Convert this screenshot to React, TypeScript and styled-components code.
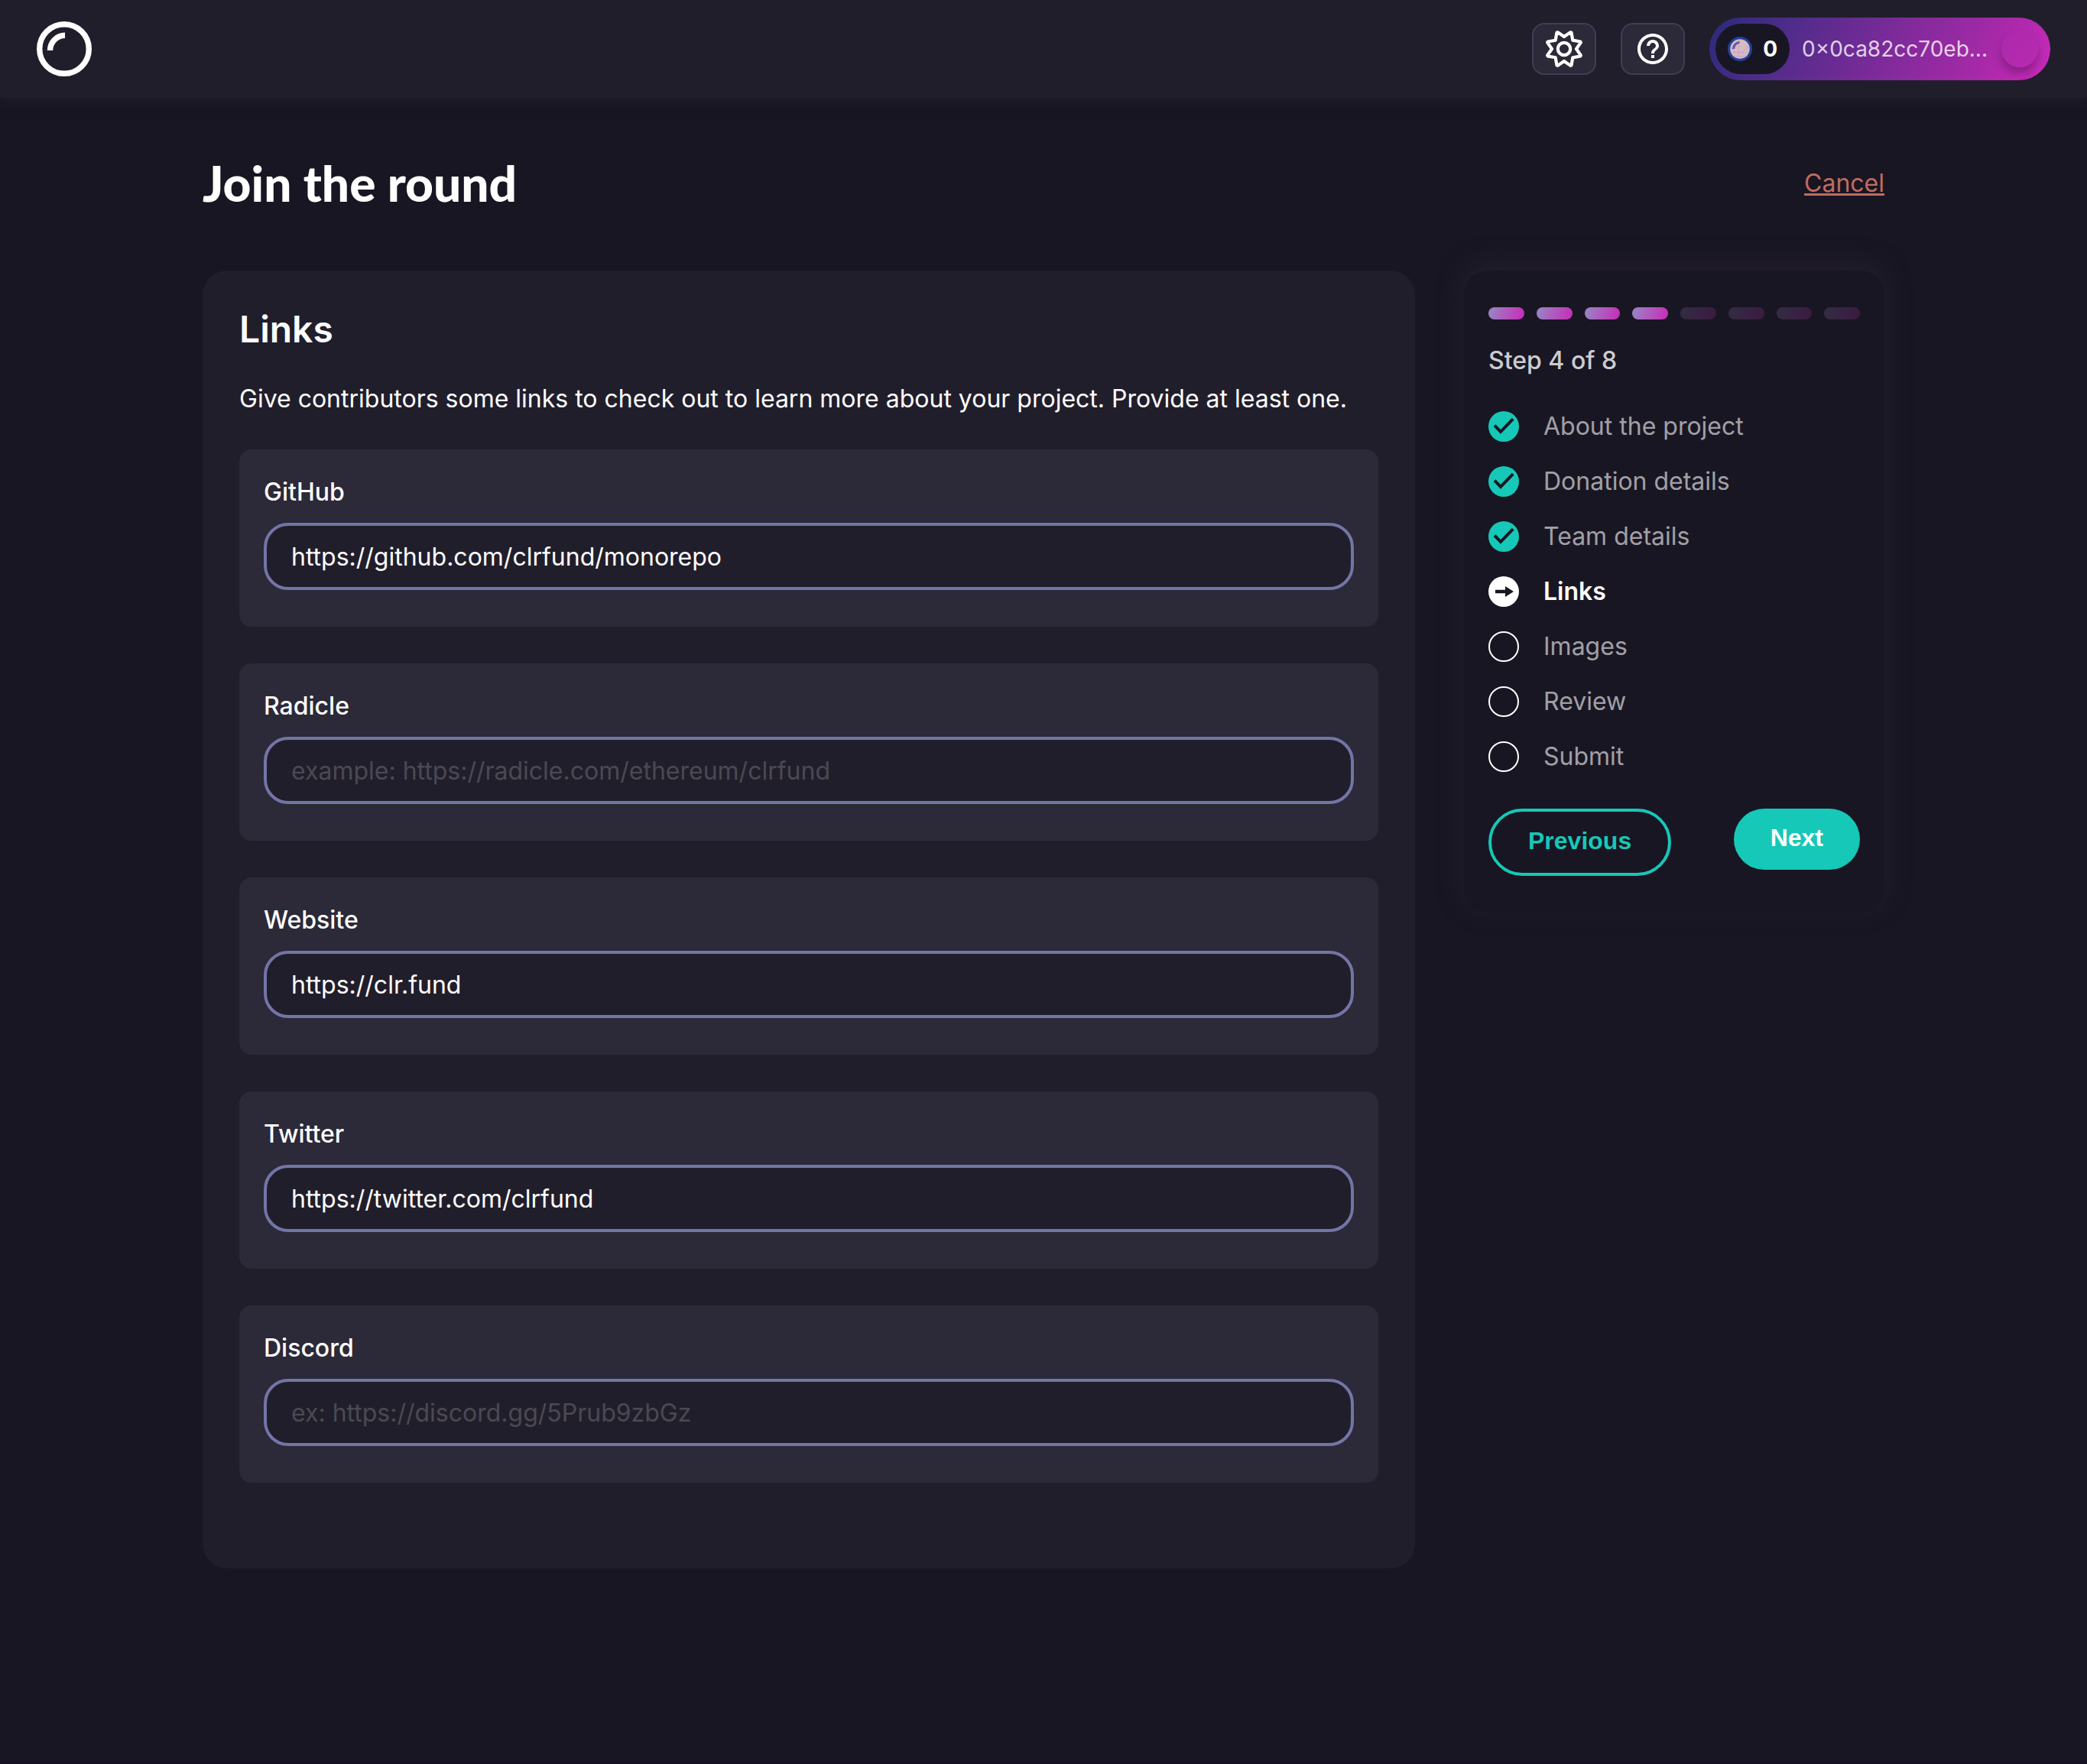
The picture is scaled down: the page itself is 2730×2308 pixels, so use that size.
import React, { useState } from "react";
import styled, { createGlobalStyle } from "styled-components";
import { MdHelpOutline } from "react-icons/md";

const color = {
  bg: "#191623",
  panel: "#211e2b",
  glow: "#23202d",
  raised: "#2c2938",
  outline: "#3f3d57",
  field: "#7375a6",
  green: "#16c8b7",
  error: "#c26b5f",
};

const GlobalStyle = createGlobalStyle`
  *, *::before, *::after { box-sizing: border-box; }
  body {
    margin: 0;
    background: ${color.bg};
    color: #fff;
    font-family: Inter, "Liberation Sans", sans-serif;
    font-size: 32px;
    line-height: 40px;
  }
`;

const Page = styled.div`
  min-height: 100vh;
  border-bottom: 2px solid #150f22;
`;

const Header = styled.header`
  display: flex;
  align-items: center;
  justify-content: space-between;
  height: 128px;
  padding: 0 48px;
  background: ${color.panel};
  box-shadow: 0 4px 16px ${color.panel};
`;

const HomeLink = styled.a`
  display: flex;
`;

const HeaderActions = styled.div`
  display: flex;
  align-items: center;
  gap: 32px;
`;

const IconButton = styled.button`
  display: flex;
  align-items: center;
  justify-content: center;
  width: 84px;
  height: 68px;
  padding: 0;
  border: 2px solid ${color.outline};
  border-radius: 16px;
  background: ${color.raised};
  color: #fff;
  cursor: pointer;
`;

const WalletButton = styled.button`
  display: flex;
  align-items: center;
  height: 82px;
  padding: 8px 16px 8px 8px;
  border: 0;
  border-radius: 41px;
  background: linear-gradient(120deg, #292b7a 0%, #512c8a 24%, #a829a9 80%, #cb2abb 100%);
  color: #fff;
  font: 400 28px/36px Inter, "Liberation Sans", sans-serif;
  cursor: pointer;
`;

const Balance = styled.span`
  display: flex;
  align-items: center;
  gap: 14px;
  height: 66px;
  padding: 0 16px;
  border-radius: 33px;
  background: ${color.bg};
  font-weight: 700;
`;

const Address = styled.span`
  margin: 0 18px 0 16px;
  color: rgba(255, 255, 255, 0.8);
`;

const Avatar = styled.span`
  width: 48px;
  height: 48px;
  border-radius: 50%;
  background: linear-gradient(120deg, #ab2aab, #b72ab1);
  box-shadow: 0 8px 12px rgba(0, 0, 0, 0.25);
`;

const Main = styled.main`
  max-width: 2200px;
  margin: 0 auto;
  padding: 64px 0;
`;

const TitleRow = styled.div`
  display: flex;
  align-items: center;
  justify-content: space-between;
  height: 96px;
  margin-bottom: 66px;
`;

const Title = styled.h1`
  margin: 0;
  font: 900 64px/80px "Lato Black", Lato, "Liberation Sans", sans-serif;
`;

const CancelLink = styled.a`
  color: ${color.error};
  text-decoration: underline;
`;

const Columns = styled.div`
  display: grid;
  grid-template-columns: minmax(0, 1fr) 25%;
  align-items: start;
  gap: 64px;
`;

const FormCard = styled.form`
  padding: 48px 48px 112px;
  border-radius: 32px;
  background: ${color.panel};
`;

const FormTitle = styled.h2`
  margin: 0;
  font-size: 48px;
  font-weight: 600;
  line-height: 58px;
`;

const Intro = styled.p`
  margin: 34px 0 38px;
  line-height: 56px;
`;

const Fields = styled.div`
  display: flex;
  flex-direction: column;
  gap: 48px;
`;

const Field = styled.div`
  display: flex;
  flex-direction: column;
  gap: 16px;
  padding: 32px 32px 48px;
  border-radius: 16px;
  background: ${color.raised};
`;

const Label = styled.label`
  font-weight: 500;
  line-height: 48px;
`;

const TextInput = styled.input`
  width: 100%;
  height: 88px;
  padding: 0 32px;
  border: 4px solid ${color.field};
  border-radius: 32px;
  outline: none;
  background: ${color.panel};
  color: #fff;
  font: inherit;

  &::placeholder {
    color: #4b4952;
    opacity: 1;
  }
`;

const Sidebar = styled.aside`
  padding: 48px 32px;
  border-radius: 32px;
  background: ${color.bg};
  box-shadow: 0 -8px 32px ${color.glow};
`;

const Progress = styled.div`
  display: flex;
  gap: 16px;
`;

const Segment = styled.span<{ $done: boolean }>`
  flex: 1;
  height: 16px;
  border-radius: 8px;
  background: linear-gradient(109deg, #9789c4 0%, #c72ab7 100%);
  opacity: ${(p) => (p.$done ? 1 : 0.2)};
`;

const StepCount = styled.p`
  margin: 34px 0 46px;
  color: rgba(255, 255, 255, 0.8);
  font-weight: 500;
`;

const Steps = styled.ol`
  display: flex;
  flex-direction: column;
  gap: 32px;
  margin: 0 0 48px;
  padding: 0;
  list-style: none;
`;

const Step = styled.li<{ $current: boolean }>`
  display: flex;
  align-items: center;
  gap: 32px;
  color: ${(p) => (p.$current ? "#fff" : "rgba(255, 255, 255, 0.6)")};
  font-weight: ${(p) => (p.$current ? 600 : 400)};
`;

const Actions = styled.div`
  display: flex;
  align-items: flex-start;
  justify-content: space-between;
`;

const PillButton = styled.button<{ $outlined?: boolean }>`
  padding: 18px 48px 22px;
  border: ${(p) => (p.$outlined ? `4px solid ${color.green}` : "0")};
  border-radius: 44px;
  background: ${(p) => (p.$outlined ? "transparent" : color.green)};
  color: ${(p) => (p.$outlined ? color.green : "#fff")};
  font: 700 32px/40px "Liberation Sans", Arial, sans-serif;
  cursor: pointer;
`;

const Logo = () => (
  <svg width="72" height="72" viewBox="0 0 72 72" fill="none" stroke="#fff" strokeWidth="7.4" aria-hidden="true">
    <circle cx="36" cy="36" r="32.3" />
    <path d="M17.5 38A19.5 19.7 0 0 1 37 18.3" />
  </svg>
);

// Eight teeth, with a valley on each axis and diagonal.
const gearPath = Array.from({ length: 8 }, (_, i) => {
  const at = (deg: number, r: number) => {
    const a = ((deg + i * 45) * Math.PI) / 180;
    return `${(24 + r * Math.sin(a)).toFixed(2)} ${(24 - r * Math.cos(a)).toFixed(2)}`;
  };
  return `${i ? "L" : "M"}${at(0, 16)}L${at(21, 23.4)}L${at(24, 23.4)}`;
}).join("");

const GearIcon = () => (
  <svg width="48" height="48" viewBox="0 0 48 48" fill="none" stroke="currentColor" strokeWidth="4.2" strokeLinejoin="round" aria-hidden="true">
    <path d={`${gearPath}Z`} />
    <circle cx="24" cy="24" r="8.2" />
  </svg>
);

const TokenIcon = () => (
  <svg width="32" height="32" viewBox="0 0 32 32" fill="none" aria-hidden="true">
    <circle cx="16" cy="16" r="14.4" fill="#d5bbc2" stroke="#1f429b" strokeWidth="3.2" />
    <path d="M14 3.5V28.5M4 13C8 24 22 24 27 10M5 21H27M7 25.5H25" stroke="#cfa3c6" strokeWidth="1" />
    <path d="M7.5 16A8.5 8.5 0 0 1 15.5 7.5" stroke="#6b56a3" strokeWidth="3.2" />
  </svg>
);

type StepState = "done" | "current" | "todo";

const StepIcon = ({ state }: { state: StepState }) => (
  <svg width="40" height="40" viewBox="0 0 40 40" fill="none" aria-hidden="true">
    {state === "done" && (
      <>
        <circle cx="20" cy="20" r="20" fill={color.green} />
        <path d="M8 18.6L16 26.8L32.2 10.2" stroke={color.bg} strokeWidth="4" />
      </>
    )}
    {state === "current" && (
      <>
        <circle cx="20" cy="20" r="20" fill="#fff" />
        <path d="M9 17.8H22V13L33 20L22 27V22.2H9Z" fill={color.bg} />
      </>
    )}
    {state === "todo" && <circle cx="20" cy="20" r="19" stroke="#fff" strokeWidth="2" />}
  </svg>
);

const fields = [
  { id: "github", label: "GitHub", value: "https://github.com/clrfund/monorepo", placeholder: "" },
  { id: "radicle", label: "Radicle", value: "", placeholder: "example: https://radicle.com/ethereum/clrfund" },
  { id: "website", label: "Website", value: "https://clr.fund", placeholder: "" },
  { id: "twitter", label: "Twitter", value: "https://twitter.com/clrfund", placeholder: "" },
  { id: "discord", label: "Discord", value: "", placeholder: "ex: https://discord.gg/5Prub9zbGz" },
];

const steps = ["About the project", "Donation details", "Team details", "Links", "Images", "Review", "Submit"];
const currentStep = 3;
const totalSteps = 8;

export default function App() {
  const [values, setValues] = useState<Record<string, string>>(
    Object.fromEntries(fields.map((f) => [f.id, f.value]))
  );

  return (
    <Page>
      <GlobalStyle />
      <Header>
        <HomeLink href="#" aria-label="Home">
          <Logo />
        </HomeLink>
        <HeaderActions>
          <IconButton type="button" aria-label="Settings">
            <GearIcon />
          </IconButton>
          <IconButton type="button" aria-label="Help">
            <MdHelpOutline size={48} />
          </IconButton>
          <WalletButton type="button">
            <Balance>
              <TokenIcon />0
            </Balance>
            <Address>0×0ca82cc70eb...</Address>
            <Avatar />
          </WalletButton>
        </HeaderActions>
      </Header>

      <Main>
        <TitleRow>
          <Title>Join the round</Title>
          <CancelLink href="#">Cancel</CancelLink>
        </TitleRow>
        <Columns>
          <FormCard id="links-form" onSubmit={(e) => e.preventDefault()}>
            <FormTitle>Links</FormTitle>
            <Intro>
              Give contributors some links to check out to learn more about your project. Provide at least one.
            </Intro>
            <Fields>
              {fields.map((f) => (
                <Field key={f.id}>
                  <Label htmlFor={f.id}>{f.label}</Label>
                  <TextInput
                    id={f.id}
                    type="url"
                    placeholder={f.placeholder}
                    value={values[f.id]}
                    onChange={(e) => setValues({ ...values, [f.id]: e.target.value })}
                  />
                </Field>
              ))}
            </Fields>
          </FormCard>

          <Sidebar>
            <Progress>
              {Array.from({ length: totalSteps }, (_, i) => (
                <Segment key={i} $done={i <= currentStep} />
              ))}
            </Progress>
            <StepCount>{`Step ${currentStep + 1} of ${totalSteps}`}</StepCount>
            <Steps>
              {steps.map((name, i) => (
                <Step key={name} $current={i === currentStep}>
                  <StepIcon state={i < currentStep ? "done" : i === currentStep ? "current" : "todo"} />
                  {name}
                </Step>
              ))}
            </Steps>
            <Actions>
              <PillButton type="button" $outlined>
                Previous
              </PillButton>
              <PillButton type="submit" form="links-form">
                Next
              </PillButton>
            </Actions>
          </Sidebar>
        </Columns>
      </Main>
    </Page>
  );
}
